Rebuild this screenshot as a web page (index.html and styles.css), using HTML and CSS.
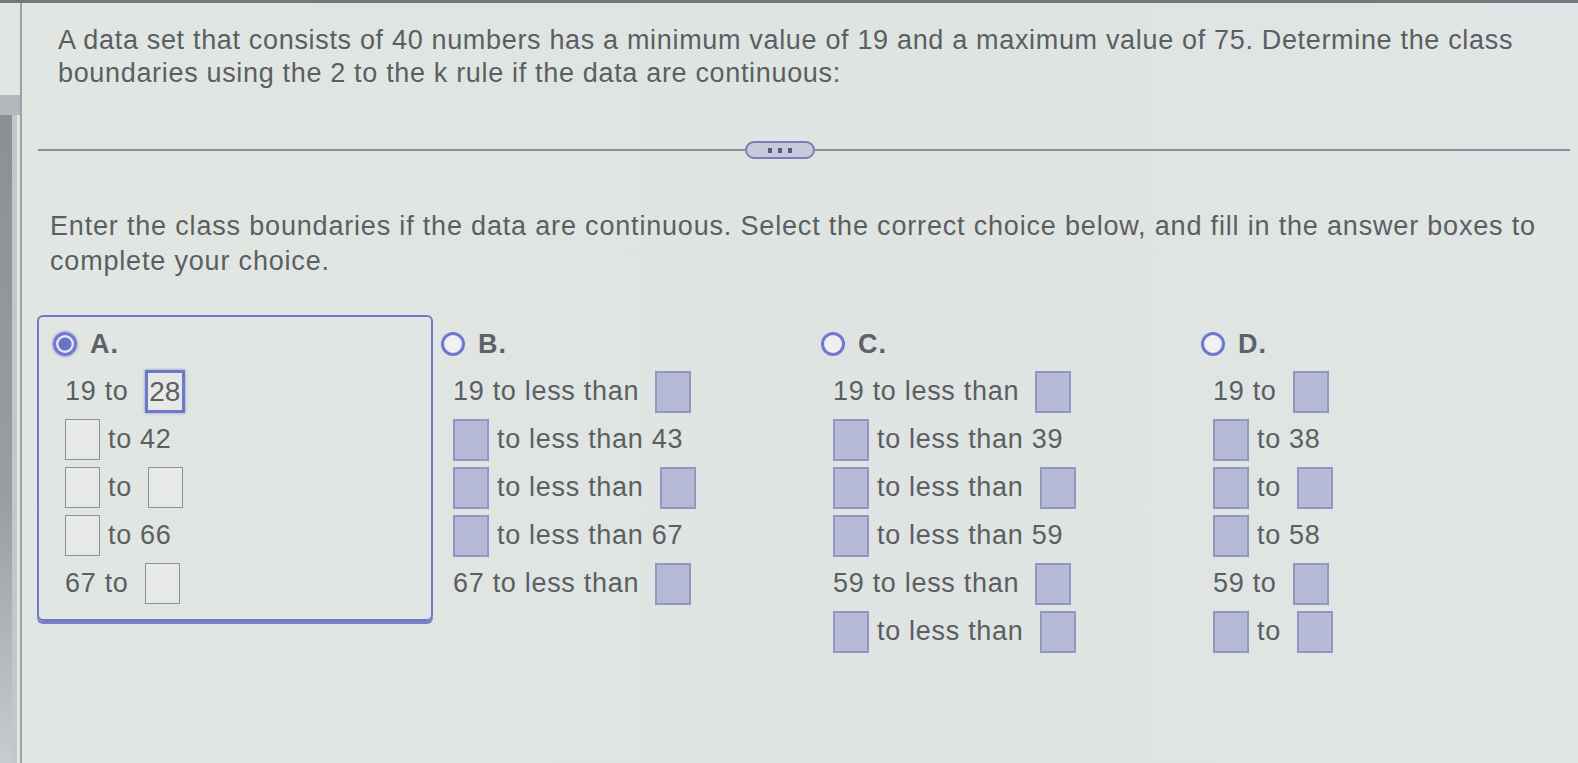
FILE: index.html
```html
<!DOCTYPE html>
<html lang="en">
<head>
<meta charset="utf-8">
<title>Class boundaries</title>
<link rel="stylesheet" href="styles.css">
</head>
<body>
<div class="topbar"></div>
<div class="screen">
  <div class="rail">
    <div class="rail-tab"></div>
    <div class="rail-dark"></div>
  </div>
  <main class="content">
    <p class="question">A data set that consists of 40 numbers has a minimum value of 19 and a maximum value of 75. Determine the class boundaries using the 2 to the k rule if the data are continuous:</p>
    <div class="divider">
      <span class="line line-left"></span>
      <span class="more"><i></i><i></i><i></i></span>
      <span class="line line-right"></span>
    </div>
    <p class="prompt">Enter the class boundaries if the data are continuous. Select the correct choice below, and fill in the answer boxes to complete your choice.</p>
    <div class="options">
      <div class="option selected">
        <div class="opt-head"><span class="radio on"></span><span class="label">A.</span></div>
        <div class="row">19 to <span class="box empty focus">28</span></div>
        <div class="row"><span class="box empty"></span>to 42</div>
        <div class="row"><span class="box empty"></span>to <span class="box empty"></span></div>
        <div class="row"><span class="box empty"></span>to 66</div>
        <div class="row">67 to <span class="box empty"></span></div>
      </div>
      <div class="option">
        <div class="opt-head"><span class="radio"></span><span class="label">B.</span></div>
        <div class="row">19 to less than <span class="box"></span></div>
        <div class="row"><span class="box"></span>to less than 43</div>
        <div class="row"><span class="box"></span>to less than <span class="box"></span></div>
        <div class="row"><span class="box"></span>to less than 67</div>
        <div class="row">67 to less than <span class="box"></span></div>
      </div>
      <div class="option">
        <div class="opt-head"><span class="radio"></span><span class="label">C.</span></div>
        <div class="row">19 to less than <span class="box"></span></div>
        <div class="row"><span class="box"></span>to less than 39</div>
        <div class="row"><span class="box"></span>to less than <span class="box"></span></div>
        <div class="row"><span class="box"></span>to less than 59</div>
        <div class="row">59 to less than <span class="box"></span></div>
        <div class="row"><span class="box"></span>to less than <span class="box"></span></div>
      </div>
      <div class="option">
        <div class="opt-head"><span class="radio"></span><span class="label">D.</span></div>
        <div class="row">19 to <span class="box"></span></div>
        <div class="row"><span class="box"></span>to 38</div>
        <div class="row"><span class="box"></span>to <span class="box"></span></div>
        <div class="row"><span class="box"></span>to 58</div>
        <div class="row">59 to <span class="box"></span></div>
        <div class="row"><span class="box"></span>to <span class="box"></span></div>
      </div>
    </div>
  </main>
</div>
</body>
</html>
```

FILE: styles.css
```css
html, body {
  margin: 0;
  padding: 0;
}
body {
  width: 1578px;
  height: 763px;
  overflow: hidden;
  background: linear-gradient(90deg, #e2e6e3 0%, #dfe3e1 60%, #e1e5e5 100%);
  font-family: "Liberation Sans", Arial, sans-serif;
  color: #5b5e62;
}
.topbar {
  height: 3px;
  background: #74777c;
}
.screen {
  display: flex;
  height: 760px;
}
.rail {
  width: 20px;
  flex: none;
  border-right: 2px solid #9ea2a6;
  display: flex;
  flex-direction: column;
}
.rail-tab {
  margin-top: 92px;
  height: 20px;
  background: #b4b7bb;
}
.rail-dark {
  flex: 1;
  width: 12px;
  background: linear-gradient(180deg, #8c8f95 0%, #9a9da2 60%, #c9ccce 100%);
  border-right: 5px solid #c4c7ca;
}
.content {
  flex: 1;
  min-width: 0;
}
.question {
  margin: 21px 30px 0 36px;
  font-size: 27px;
  line-height: 33px;
  letter-spacing: 0.67px;
}
.divider {
  margin: 51px 8px 0 16px;
  height: 18px;
  display: flex;
  align-items: center;
}
.line {
  height: 2px;
  background: #8a8e98;
}
.line-left {
  width: 707px;
}
.line-right {
  flex: 1;
}
.more {
  flex: none;
  width: 66px;
  height: 14px;
  border: 2px solid #7a80b6;
  border-radius: 9px;
  background: #c6cadc;
  display: flex;
  align-items: center;
  justify-content: center;
  gap: 6px;
}
.more i {
  width: 4px;
  height: 5px;
  background: #5b5f78;
}
.prompt {
  margin: 50px 30px 0 28px;
  font-size: 27px;
  line-height: 35px;
  letter-spacing: 0.82px;
}
.options {
  margin: 36px 0 0 15px;
  display: grid;
  grid-template-columns: 396px 380px 380px 380px;
  align-items: start;
  font-size: 27px;
}
.option {
  border: 2px solid transparent;
  padding: 15px 10px 15px 6px;
}
.option.selected {
  border: 2px solid #7077c4;
  border-radius: 6px;
  box-shadow: 0 3px 0 #7a80c4;
  padding-left: 14px;
}
.opt-head {
  display: flex;
  align-items: center;
  gap: 13px;
  height: 24px;
  margin-bottom: 15px;
}
.radio {
  width: 18px;
  height: 18px;
  border: 3.5px solid #6f79cf;
  border-radius: 50%;
  box-sizing: content-box;
  background: #eef0f4;
}
.radio.on {
  background: radial-gradient(circle, #6a72c2 0 6px, #e4e6f0 7px);
  box-shadow: 0 0 3px #6a72c2;
}
.label {
  font-weight: bold;
  font-size: 27px;
  color: #5e6168;
  letter-spacing: 1px;
}
.row {
  display: flex;
  align-items: center;
  gap: 8px;
  height: 41px;
  margin-bottom: 7px;
  padding-left: 12px;
  white-space: pre;
  letter-spacing: 0.7px;
}
.row:last-child {
  margin-bottom: 0;
}
.box {
  flex: none;
  width: 32px;
  height: 38px;
  border: 2px solid #9297c2;
  background: #b6bad6;
  box-sizing: content-box;
  display: flex;
  align-items: center;
  justify-content: center;
}
.box.empty {
  width: 33px;
  height: 39px;
  border: 1.5px solid #8c8f93;
  background: #e6e9e8;
}
.box.focus {
  border: 3px solid #6f77c8;
  width: 34px;
  height: 37px;
  box-shadow: 0 0 3px #8a90d0;
  color: #5b5e62;
  font-size: 28px;
  letter-spacing: 0;
}
```
